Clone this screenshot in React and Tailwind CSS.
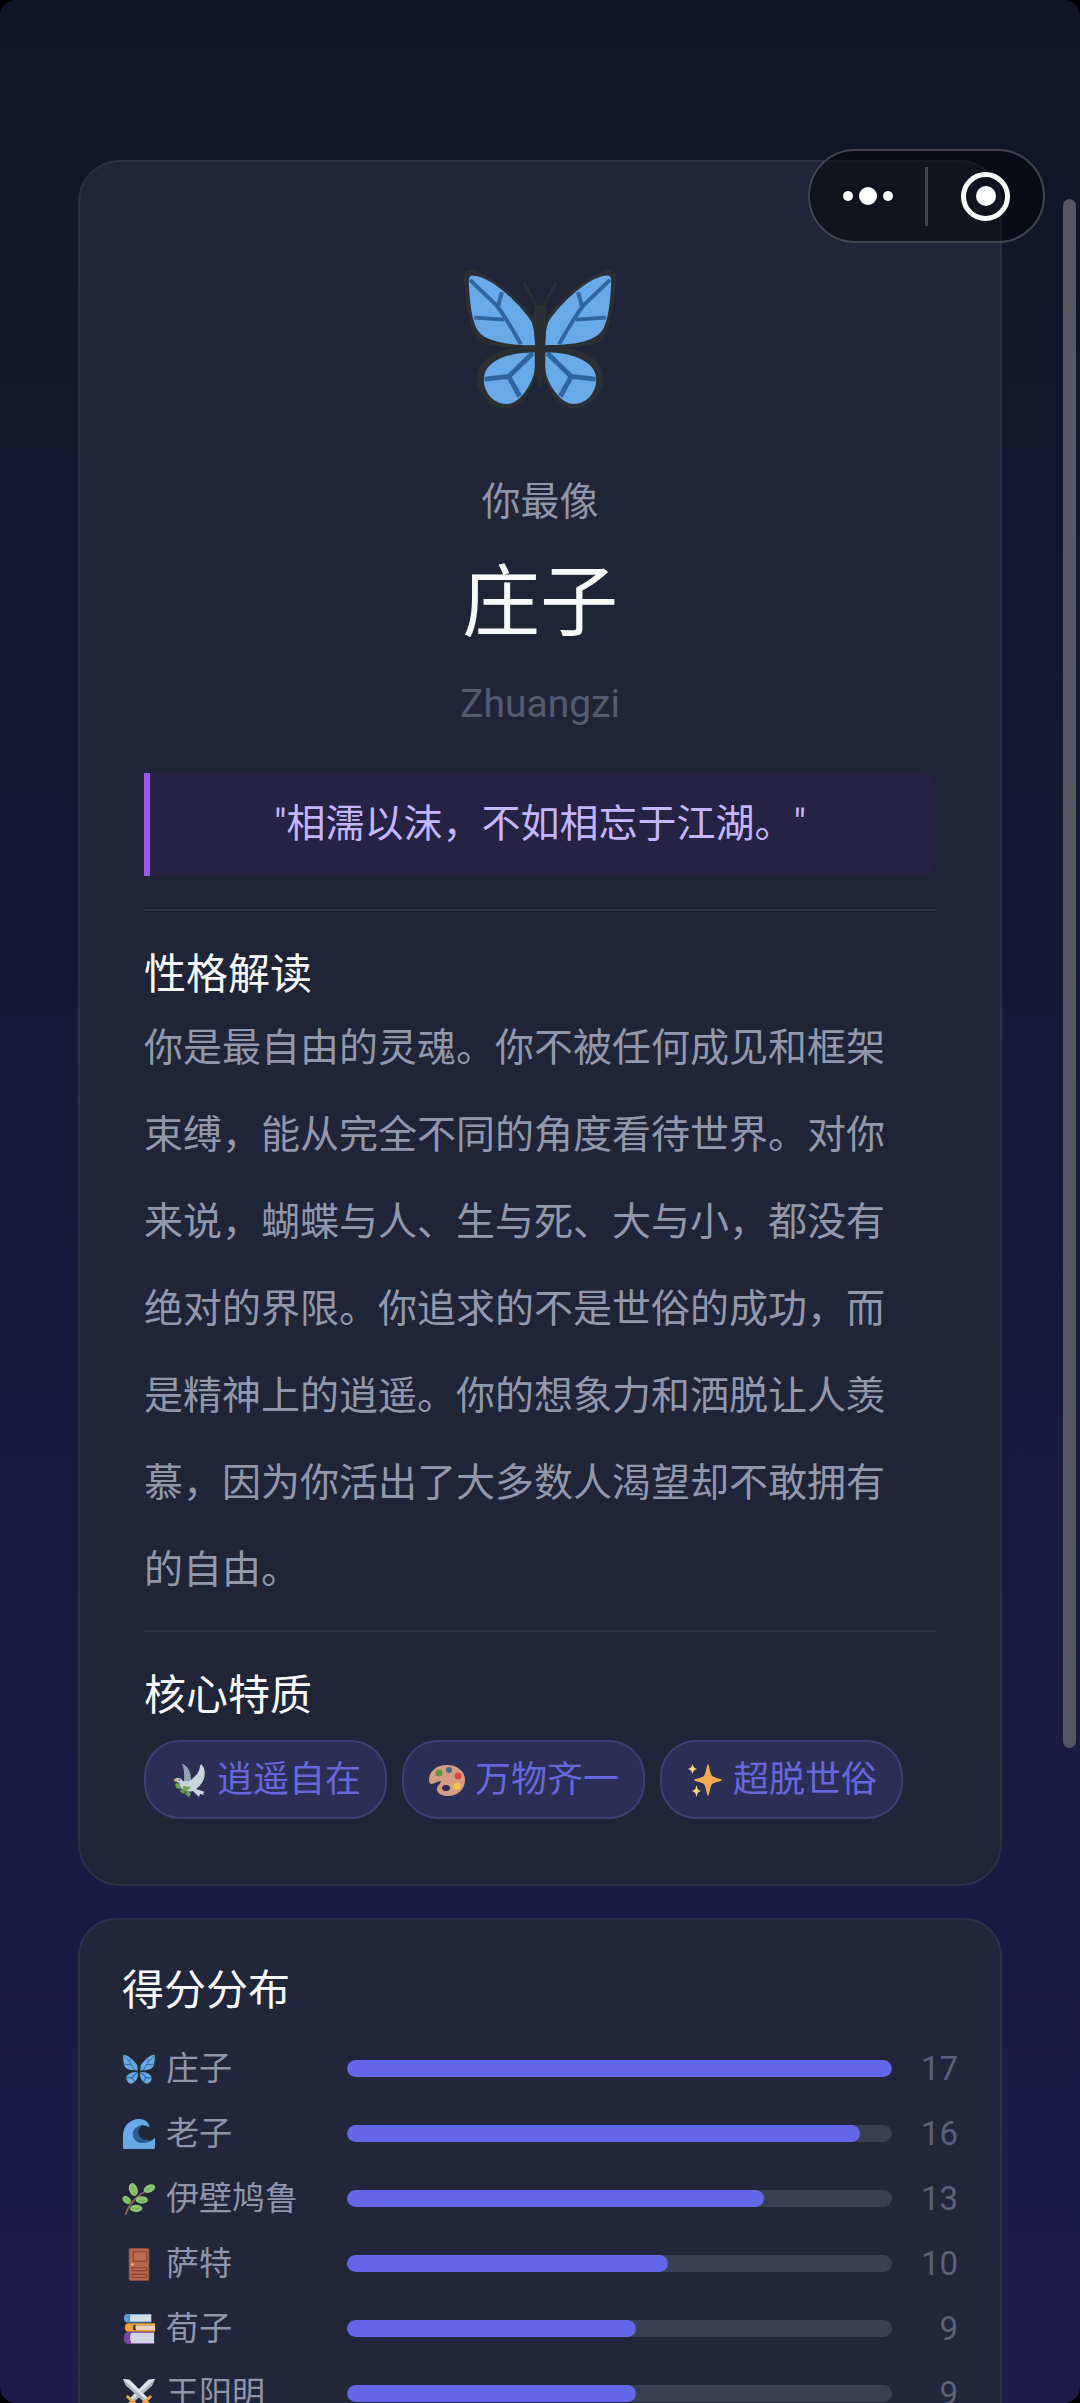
const traits = [
  { icon: DoveIcon, label: "逍遥自在" },
  { icon: PaletteIcon, label: "万物齐一" },
  { icon: SparklesIcon, label: "超脱世俗" },
];

const scores = [
  { icon: ButterflyIcon, name: "庄子", score: 17 },
  { icon: WaveIcon, name: "老子", score: 16 },
  { icon: HerbIcon, name: "伊壁鸠鲁", score: 13 },
  { icon: DoorIcon, name: "萨特", score: 10 },
  { icon: BooksIcon, name: "荀子", score: 9 },
  { icon: SwordsIcon, name: "王阳明", score: 9 },
];

const maxScore = 17;

function ButterflyWings() {
  return (
    <>
      <path fill="#2a2f34" d="M90 54C74 53 67 64 69 82C72 140 84 222 104 258C122 288 200 292 290 290V212C250 150 150 62 90 54Z" />
      <path fill="#2a2f34" d="M290 284C205 288 108 306 107 386C107 432 150 476 196 476C244 476 278 420 292 366Z" />
      <path fill="#68a9e8" d="M93 71C84 71 82 86 84 102C86 150 92 200 106 230C124 270 190 283 285 283C285 256 281 232 275 212C236 154 148 70 93 71Z" />
      <path fill="#68a9e8" d="M284 305C216 303 130 326 129 386C129 430 160 462 198 462C240 462 284 392 284 350Z" />
      <path fill="none" stroke="#2f669f" strokeWidth="12" d="M87 84L166 160Q190 188 242 280M184 122L172 165M100 199L192 205" />
      <path fill="none" stroke="#2f669f" strokeWidth="15" d="M278 307L205 378L131 386M205 378L238 438" />
    </>
  );
}

function ButterflyIcon({ className }) {
  return (
    <svg viewBox="68 48 464 432" className={className} aria-hidden="true">
      <ButterflyWings />
      <g transform="translate(600 0) scale(-1 1)">
        <ButterflyWings />
      </g>
      <path fill="none" stroke="#2a2f34" strokeWidth="7" d="M252 94L294 172M348 94L306 172" />
      <path fill="#2a2f34" d="M281 178C281 155 319 155 320 178C320 220 316 260 316 300C314 350 310 404 300 408C290 404 286 350 285 300C285 260 281 220 281 178Z" />
    </svg>
  );
}

function WaveIcon({ className }) {
  return (
    <svg viewBox="0 0 36 36" className={className} aria-hidden="true">
      <path fill="#2c5e92" d="M20 7C10 9 9 20 15 25C20 29 28 28 31 26L27 24C19 25 14 16 20 10Z" />
      <path fill="#68a9e8" d="M1 20C1 9 9 2 18 2C25 2 29 6 29 11C25 8 18 8 14 12C9 17 12 25 18 27C24 29 31 26 35 22V32Q35 34 33 34H3Q1 34 1 32Z" />
    </svg>
  );
}

function HerbIcon({ className }) {
  return (
    <svg viewBox="0 0 36 36" className={className} aria-hidden="true">
      <path fill="none" stroke="#8f655c" strokeWidth="2" strokeLinecap="round" d="M4 34C7 24 16 14 26 9" />
      <g fill="#8cc46c">
        <ellipse cx="12" cy="8" rx="4.500" ry="7" transform="rotate(-18 12 8)" />
        <ellipse cx="29" cy="7" rx="6.500" ry="4" transform="rotate(-28 29 7)" />
        <ellipse cx="5" cy="19" rx="5" ry="3.500" transform="rotate(42 5 19)" />
        <ellipse cx="21" cy="19" rx="6.500" ry="4" />
        <ellipse cx="15" cy="28" rx="6.500" ry="4" />
      </g>
      <path fill="none" stroke="#669c4b" strokeWidth="0.800" d="M11 5L14 13M26 9L32 5M3 17L8 21M17 20H25M11 28H19" />
    </svg>
  );
}

function DoorIcon({ className }) {
  return (
    <svg viewBox="0 0 36 36" className={className} aria-hidden="true">
      <rect x="7" y="1" width="22" height="35" rx="2" fill="#8d4a38" />
      <rect x="8" y="2" width="20" height="33" rx="1" fill="#b5654c" />
      <g fill="#bd6b51" stroke="#884533" strokeWidth="1.200">
        <path d="M12 5H26V15H12ZM11 22H26V25H11ZM11 29H26V32H11Z" />
      </g>
      <circle cx="11" cy="18.500" r="1.500" fill="#efb45c" />
    </svg>
  );
}

function BooksIcon({ className }) {
  return (
    <svg viewBox="0 0 36 36" className={className} aria-hidden="true">
      <path fill="#5b9bd2" d="M5 2H31V4H8V9H31V11H5Q2 10 2 6.500Q2 3 5 2Z" />
      <path fill="#d3dde8" d="M9 3H31V10H9Q7 7 9 3Z" />
      <path fill="#f0a13d" d="M6 12H35V14H12V19H35V21H6Q3 20 3 16.500Q3 13 6 12Z" />
      <path fill="#e7d3bd" d="M15 14H35V19H15Q13 16 15 14Z" />
      <path fill="#76469f" d="M6 21H34V23H10V32H34V34H6Q2 33 2 27.500Q2 22 6 21Z" />
      <path fill="#d0d4e3" d="M10 22H34V33H10Q7 27 10 22Z" />
    </svg>
  );
}

function Sword() {
  return (
    <>
      <path fill="#aebbc5" d="M1 2L8 3L28 23L24 27L4 9Z" />
      <path fill="#dce5eb" d="M1 2L8 3L28 23L26 25Z" />
      <path fill="none" stroke="#e9a84a" strokeWidth="3" strokeLinecap="round" d="M21 29L30 21M27 27L32 32" />
      <circle cx="33" cy="33" r="2" fill="#b86b3a" />
    </>
  );
}

function SwordsIcon({ className }) {
  return (
    <svg viewBox="0 0 36 36" className={className} aria-hidden="true">
      <g transform="translate(36 0) scale(-1 1)">
        <Sword />
      </g>
      <Sword />
    </svg>
  );
}

function DoveIcon({ className }) {
  return (
    <svg viewBox="0 0 36 36" className={className} aria-hidden="true">
      <path fill="#92a1b2" d="M11 2C16 3 20 9 20 18L13 20C13 15 14 9 11 2Z" />
      <path fill="#c7d5df" d="M3 18C6 14 10 16 12 19C17 20 21 18 24 14C29 10 28 6 30 2C35 6 35 16 30 22C28 25 26 26 25 27L34 30L32 31L33 33L29 32L28 35L22 29C15 31 9 28 8 21Z" />
      <path fill="#e0a14a" d="M2 18L6 17L5 20Z" />
      <circle cx="8" cy="18" r="0.800" fill="#27303b" />
      <path fill="none" stroke="#5d9142" strokeWidth="1.500" d="M5 21L17 34" />
      <path fill="#6da34d" d="M4 22L9 21L9 27L5 26ZM12 24L20 25L16 29L12 28ZM8 28L14 29L12 32ZM15 29L20 31L18 36Z" />
    </svg>
  );
}

function PaletteIcon({ className }) {
  return (
    <svg viewBox="0 0 36 36" className={className} aria-hidden="true">
      <path fill="#d59d82" d="M0 18C0 9 8 3 18 3C28 3 36 9 36 18C36 28 28 34 19 34C11 34 7 30 8 26C9 23 12 21 12 19C9 19 5 22 2 22Q0 21 0 18Z" />
      <ellipse cx="17" cy="26" rx="4" ry="3" fill="#292d4f" />
      <circle cx="10" cy="11" r="3.500" fill="#65963b" />
      <circle cx="20" cy="8" r="3" fill="#426b89" />
      <circle cx="29" cy="14" r="3.500" fill="#d94a45" />
      <circle cx="28" cy="24" r="3.500" fill="#f6c646" />
    </svg>
  );
}

function SparklesIcon({ className }) {
  return (
    <svg viewBox="0 0 36 36" className={className} aria-hidden="true">
      <path fill="#f4ad4e" d="M21 2C22 2 23 11 25 14C28 16 35 17 35 18C35 19 28 20 25 22C23 25 22 34 21 34C20 34 19 25 17 22C14 20 7 19 7 18C7 17 14 16 17 14C19 11 20 2 21 2Z" />
      <path fill="#f4d87d" d="M5.500 2C6.500 5 7 6 10 7C7 8 6.500 9 5.500 12C4.500 9 4 8 1 7C4 6 4.500 5 5.500 2Z" />
      <path fill="#f4d87d" d="M9.500 23C10.500 27 11 28 14 29C11 30 10.500 31 9.500 35C8.500 31 8 30 5 29C8 28 8.500 27 9.500 23Z" />
    </svg>
  );
}

function Capsule() {
  return (
    <div className="absolute top-[149px] right-[35px] flex h-[94px] w-[237px] items-center rounded-full border-2 border-[#42454f] bg-black/45">
      <button type="button" aria-label="更多" className="flex h-full flex-1 items-center justify-center gap-1.5">
        <span className="size-2.5 rounded-full bg-white" />
        <span className="size-[18px] rounded-full bg-white" />
        <span className="size-2.5 rounded-full bg-white" />
      </button>
      <span className="h-[59px] w-[3px] bg-[#42454f]" />
      <button type="button" aria-label="关闭" className="flex h-full flex-1 items-center justify-center">
        <span className="flex size-[49px] items-center justify-center rounded-full border-5 border-white">
          <span className="size-5 rounded-full bg-white" />
        </span>
      </button>
    </div>
  );
}

export default function App() {
  return (
    <div className="h-screen bg-black font-['Roboto','Noto_Sans_CJK_SC',sans-serif]">
      <div className="relative h-full overflow-hidden rounded-2xl bg-linear-to-b from-[#101628] to-[#1e1b4b]">
        <main className="flex h-full flex-col gap-8 overflow-y-auto px-[78px] pt-40 [scrollbar-width:none]">
          {/* Main result */}
          <section className="shrink-0 rounded-[42px] border-2 border-[#2b3044] bg-[#1f2537] px-16 pb-[65px]">
            <div className="flex flex-col items-center pt-[106px] text-center">
              <ButterflyIcon className="h-[142px] w-[156px]" />
              <p className="mt-[62px] text-[39px] leading-[60px] text-[#8f95aa]">你最像</p>
              <h1 className="mt-6 text-[78px] leading-[96px] text-[#f8fafc]">庄子</h1>
              <p className="mt-[22px] text-[39px] leading-[60px] text-[#535b70]">Zhuangzi</p>
            </div>

            <blockquote className="mt-[39px] rounded-r-2xl border-l-6 border-[#9958e8] bg-[#262243] pr-1.5 text-center text-[39px] leading-[103px] text-[#c4b5fd]">
              "相濡以沫，不如相忘于江湖。"
            </blockquote>

            <hr className="mt-[33px] border-t-2 border-[#2b3044]" />

            <h2 className="mt-[34px] text-[42px] leading-[60px] text-[#f8fafc]">性格解读</h2>
            <p className="pr-5 text-[39px] leading-[87px] text-[#9198ac]">
              你是最自由的灵魂。你不被任何成见和框架束缚，能从完全不同的角度看待世界。对你来说，蝴蝶与人、生与死、大与小，都没有绝对的界限。你追求的不是世俗的成功，而是精神上的逍遥。你的想象力和洒脱让人羡慕，因为你活出了大多数人渴望却不敢拥有的自由。
            </p>

            <hr className="mt-4 border-t-2 border-[#2b3044]" />

            <h2 className="mt-[34px] text-[42px] leading-[60px] text-[#f8fafc]">核心特质</h2>
            <ul className="mt-3.5 flex flex-wrap gap-[15px]">
              {traits.map(({ icon: Icon, label }) => (
                <li
                  key={label}
                  className="flex h-[79px] items-center gap-2.5 rounded-[36px] border-2 border-[#3e4073] bg-[#2b2f56] pr-6 pl-[25px] text-[36px] text-[#6667dc]"
                >
                  <Icon className="size-9" />
                  {label}
                </li>
              ))}
            </ul>
          </section>

          {/* Score distribution */}
          <section className="shrink-0 rounded-[38px] border-2 border-[#2d3047] bg-[#21263a] px-[42px] py-[41px]">
            <h2 className="text-[42px] leading-[60px] text-[#f8fafc]">得分分布</h2>
            <ul className="mt-[15px]">
              {scores.map(({ icon: Icon, name, score }) => (
                <li key={name} className="flex h-[65px] items-center">
                  <span className="flex w-[225px] items-center gap-2.5 text-[33px] text-[#8f95aa]">
                    <Icon className="size-[34px]" />
                    {name}
                  </span>
                  <span className="h-[17px] flex-1 overflow-hidden rounded-full bg-[#374152]">
                    <span
                      className="block h-full rounded-full bg-[#6466e9]"
                      style={{ width: `${(score / maxScore) * 100}%` }}
                    />
                  </span>
                  <span className="w-[66px] text-right text-[33px] text-[#5c6079]">{score}</span>
                </li>
              ))}
            </ul>
          </section>
        </main>

        <div className="absolute top-[199px] right-1 h-[1549px] w-[13px] rounded-full bg-[#55565f]" />
        <Capsule />
      </div>
    </div>
  );
}
